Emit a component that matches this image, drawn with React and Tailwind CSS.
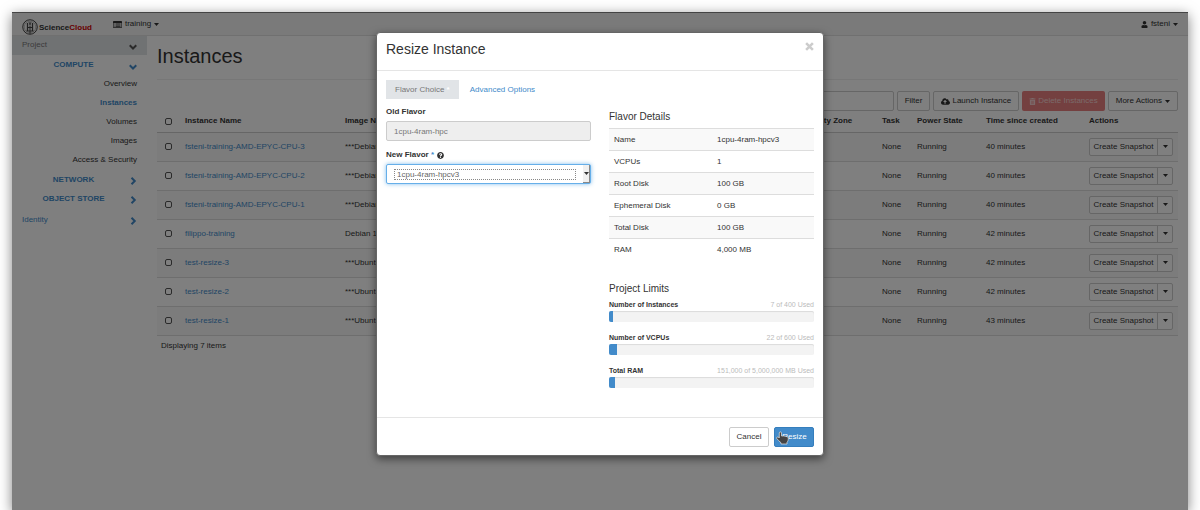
import React from "react";
import { FaCloudUploadAlt, FaQuestionCircle, FaTrashAlt, FaUser } from "react-icons/fa";

const instances = [
  { name: "fsteni-training-AMD-EPYC-CPU-3", image: "***Debian 10", age: "40 minutes" },
  { name: "fsteni-training-AMD-EPYC-CPU-2", image: "***Debian 10", age: "40 minutes" },
  { name: "fsteni-training-AMD-EPYC-CPU-1", image: "***Debian 10", age: "40 minutes" },
  { name: "filippo-training", image: "Debian 10", age: "42 minutes" },
  { name: "test-resize-3", image: "***Ubuntu 20.04", age: "42 minutes" },
  { name: "test-resize-2", image: "***Ubuntu 20.04", age: "42 minutes" },
  { name: "test-resize-1", image: "***Ubuntu 20.04", age: "43 minutes" },
];

const flavorDetails = [
  ["Name", "1cpu-4ram-hpcv3"],
  ["VCPUs", "1"],
  ["Root Disk", "100 GB"],
  ["Ephemeral Disk", "0 GB"],
  ["Total Disk", "100 GB"],
  ["RAM", "4,000 MB"],
];

const limits = [
  { label: "Number of Instances", used: "7 of 400 Used", percent: 2 },
  { label: "Number of VCPUs", used: "22 of 600 Used", percent: 4 },
  { label: "Total RAM", used: "151,000 of 5,000,000 MB Used", percent: 3 },
];

function SealLogo() {
  return (
    <svg viewBox="0 0 32 32" className="size-4" fill="none" stroke="#444" aria-hidden="true">
      <circle cx="16" cy="16" r="14.5" strokeWidth="2" />
      <circle cx="16" cy="16" r="11.500" strokeWidth="1" stroke="#888" />
      <path d="M11 24V8M21 24V8" strokeWidth="2.500" />
      <path d="M16 13v17M9 24h14M12 17h8" strokeWidth="2" />
      <path d="M14 6l2 6 2-6" strokeWidth="1.500" />
    </svg>
  );
}

function ListIcon() {
  return (
    <svg viewBox="0 0 18 14" className="h-[7px] w-[9px]" aria-hidden="true">
      <path
        fill="currentColor"
        fillRule="evenodd"
        d="M1.5 0h15A1.5 1.5 0 0 1 18 1.5v11a1.5 1.5 0 0 1-1.5 1.5h-15A1.5 1.5 0 0 1 0 12.500v-11A1.500 1.500 0 0 1 1.500 0zM1.200 4v8.700h15.600V4zM3 5h2v1.500H3zM6 5h9v1.500H6zM3 7.700h2v1.500H3zM6 7.700h9v1.500H6zM3 10.400h2v1.500H3zM6 10.400h9v1.500H6z"
      />
    </svg>
  );
}

function Caret() {
  return (
    <svg viewBox="0 0 10 6" className="h-[3px] w-[5px] shrink-0" aria-hidden="true">
      <path d="M0 0h10L5 6z" fill="currentColor" />
    </svg>
  );
}

function ChevronDown() {
  return (
    <svg viewBox="0 0 16 16" className="mt-1 size-2 shrink-0" aria-hidden="true">
      <path d="M1.500 4.500L8 11l6.500-6.500" fill="none" stroke="currentColor" strokeWidth="4" />
    </svg>
  );
}

function ChevronRight() {
  return (
    <svg viewBox="0 0 16 16" className="mt-[3px] size-2 shrink-0" aria-hidden="true">
      <path d="M5 1.500L11.500 8 5 14.500" fill="none" stroke="currentColor" strokeWidth="4" />
    </svg>
  );
}

function CloseIcon() {
  return (
    <svg viewBox="0 0 16 16" className="size-[9px]" aria-hidden="true">
      <path d="M2 2l12 12M14 2L2 14" fill="none" stroke="currentColor" strokeWidth="4.500" />
    </svg>
  );
}

function HandCursor() {
  return (
    <svg
      viewBox="0 0 26 28"
      className="pointer-events-none absolute top-[3px] left-px h-[14px] w-[13px]"
      aria-hidden="true"
    >
      <path
        d="M6.500 4C6.500 1 11 1 11 4v6c5-.5 12 .5 13.500 3.500 .3 4-.5 7-2.500 9V26H10v-2.500C7 21 4 18 1.500 15c-1-2.500 2-4 3.500-2.500L6.500 14z"
        fill="#444"
        stroke="#ddd"
        strokeWidth="1.500"
      />
    </svg>
  );
}

function NavGroup({ label, open }) {
  return (
    <button type="button" className="flex h-[19px] w-full items-center pr-[10px] pl-[6px] font-bold text-[#428bca]">
      <span className="flex-1 text-center">{label}</span>
      {open ? <ChevronDown /> : <ChevronRight />}
    </button>
  );
}

function Sidebar() {
  return (
    <nav aria-label="Panels" className="w-[135px] shrink-0">
      <button
        type="button"
        className="flex h-[19px] w-full items-center justify-between bg-[#e1e4e7] pr-[10px] pb-px pl-[10px] text-[#777]"
      >
        Project
        <span className="text-[#555]">
          <ChevronDown />
        </span>
      </button>
      <NavGroup label="COMPUTE" open />
      <ul className="mb-px text-right text-[#333]">
        {["Overview", "Instances", "Volumes", "Images", "Access & Security"].map((item) => (
          <li key={item} className="flex h-[19px] items-center justify-end pr-[10px]">
            <a href="#" className={item === "Instances" ? "font-bold text-[#428bca]" : ""}>
              {item}
            </a>
          </li>
        ))}
      </ul>
      <NavGroup label="NETWORK" />
      <NavGroup label="OBJECT STORE" />
      <button
        type="button"
        className="mt-[2px] flex h-[19px] w-full items-center justify-between px-[10px] text-[#428bca]"
      >
        Identity
        <ChevronRight />
      </button>
    </nav>
  );
}

function InstancesTable() {
  return (
    <table className="w-full table-fixed border-collapse text-left">
      <thead>
        <tr className="h-[21px] border-b border-[#ccc]">
          <th className="w-[23px] pl-2">
            <input
              type="checkbox"
              aria-label="Select all instances"
              className="block size-[7px] appearance-none rounded-[2px] border border-[#555] bg-white"
            />
          </th>
          <th className="w-[160px] px-[5px]">Instance Name</th>
          <th className="px-[5px]">Image Name</th>
          <th className="w-[93px] px-[5px] whitespace-nowrap">Availability Zone</th>
          <th className="w-[35px] px-[5px]">Task</th>
          <th className="w-[69px] px-[5px]">Power State</th>
          <th className="w-[103px] px-[5px]">Time since created</th>
          <th className="w-[94px] px-[5px]">Actions</th>
        </tr>
      </thead>
      <tbody>
        {instances.map((row) => (
          <tr key={row.name} className="h-[29px] border-b border-[#ddd] odd:bg-[#f9f9f9]">
            <td className="pl-2">
              <input
                type="checkbox"
                aria-label={`Select ${row.name}`}
                className="block size-[7px] appearance-none rounded-[2px] border border-[#555] bg-white"
              />
            </td>
            <td className="px-[5px]">
              <a href="#" className="text-[#428bca]">
                {row.name}
              </a>
            </td>
            <td className="px-[5px]">{row.image}</td>
            <td className="px-[5px]">nova</td>
            <td className="px-[5px]">None</td>
            <td className="px-[5px]">Running</td>
            <td className="px-[5px]">{row.age}</td>
            <td className="px-[5px]">
              <div className="flex h-[18px] rounded-[2px] border border-[#ccc] bg-white">
                <button type="button" className="flex-1 border-r border-[#ccc] whitespace-nowrap">
                  Create Snapshot
                </button>
                <button type="button" aria-label="More actions" className="flex w-[14px] items-center justify-center">
                  <Caret />
                </button>
              </div>
            </td>
          </tr>
        ))}
      </tbody>
    </table>
  );
}

function Toolbar() {
  return (
    <div className="flex h-5 justify-end gap-[3px]">
      <input type="search" aria-label="Filter instances" className="w-[180px] rounded-[2px] border border-[#ccc] bg-white px-2" />
      <button type="button" className="rounded-[2px] border border-[#ccc] bg-white px-[7px]">
        Filter
      </button>
      <button
        type="button"
        className="flex items-center gap-[2px] rounded-[2px] border border-[#ccc] bg-white px-[7px] whitespace-nowrap"
      >
        <FaCloudUploadAlt className="size-[9px]" />
        Launch Instance
      </button>
      <button
        type="button"
        disabled
        className="flex items-center gap-[2px] rounded-[2px] bg-[#e98080] px-[7px] whitespace-nowrap text-[#f6d5d5]"
      >
        <FaTrashAlt className="size-[7px]" />
        Delete Instances
      </button>
      <button
        type="button"
        className="flex items-center gap-[3px] rounded-[2px] border border-[#ccc] bg-white px-[7px] whitespace-nowrap"
      >
        More Actions
        <Caret />
      </button>
    </div>
  );
}

function ResizeDialog() {
  return (
    <div
      role="dialog"
      aria-modal="true"
      aria-labelledby="dialog-title"
      className="w-[448px] rounded-[4px] border border-[#666] bg-white shadow-[0_3px_9px_rgba(0,0,0,0.5)]"
    >
      <div className="flex h-[38px] items-start justify-between border-b border-[#e5e5e5] px-[9px] pt-2">
        <h2 id="dialog-title" className="text-[14px] leading-4">
          Resize Instance
        </h2>
        <button type="button" aria-label="Close" className="pt-px text-[#ccc]">
          <CloseIcon />
        </button>
      </div>

      <div className="px-[9px] pt-[9px] pb-[29px]">
        <div role="tablist" className="flex h-[19px] gap-px">
          <button type="button" role="tab" aria-selected="true" className="bg-[#e1e4e7] px-[9px] text-[#777]">
            Flavor Choice <span className="font-bold text-white">*</span>
          </button>
          <button type="button" role="tab" aria-selected="false" className="px-[10px] text-[#428bca]">
            Advanced Options
          </button>
        </div>

        <div className="grid grid-cols-2 gap-x-[18px]">
          <div className="pt-2">
            <label htmlFor="old-flavor" className="block font-bold">
              Old Flavor
            </label>
            <input
              id="old-flavor"
              type="text"
              readOnly
              value="1cpu-4ram-hpc"
              className="mt-1 block h-5 w-full rounded-[2px] border border-[#ccc] bg-[#eee] px-[7px] text-[#777]"
            />
            <label htmlFor="new-flavor" className="mt-[9px] flex items-center gap-[3px] font-bold">
              <span>
                New Flavor <span className="text-[#428bca]">*</span>
              </span>
              <FaQuestionCircle className="size-[7px]" />
            </label>
            <div className="mt-1 flex h-5 items-center rounded-[2px] border border-[#66afe9] bg-white pl-[7px] shadow-[0_0_4px_rgba(102,175,233,0.8)]">
              <select
                id="new-flavor"
                defaultValue="1cpu-4ram-hpcv3"
                className="mr-[7px] h-[11px] min-w-0 flex-1 appearance-none border border-dotted border-[#888] px-[2px] leading-[9px] text-[#666]"
              >
                <option>1cpu-4ram-hpcv3</option>
              </select>
              <span className="flex h-[18px] w-[7px] items-center justify-center border-r border-b border-[#888] bg-[#f0f0f0]">
                <Caret />
              </span>
            </div>
          </div>

          <div className="pt-3">
            <h3 className="text-[10px] leading-3">Flavor Details</h3>
            <table className="mt-[5px] w-full table-fixed border-collapse text-left">
              <tbody>
                {flavorDetails.map(([label, value]) => (
                  <tr key={label} className="h-[22px] border-t border-[#ddd] odd:bg-[#f9f9f9]">
                    <th scope="row" className="w-[103px] px-[5px] font-normal">
                      {label}
                    </th>
                    <td className="px-[5px]">{value}</td>
                  </tr>
                ))}
              </tbody>
            </table>

            <h3 className="mt-[22px] text-[10px] leading-3">Project Limits</h3>
            <div className="mt-1 flex flex-col gap-[10px]">
              {limits.map((limit) => (
                <div key={limit.label}>
                  <div className="flex h-3 items-center justify-between text-[7px]">
                    <strong>{limit.label}</strong>
                    <span className="text-[#bbb]">{limit.used}</span>
                  </div>
                  <div className="h-[11px] overflow-hidden rounded-[2px] bg-[#f3f3f3] shadow-[inset_0_1px_1px_rgba(0,0,0,0.1)]">
                    <div className="h-full bg-[#428bca]" style={{ width: `${limit.percent}%` }} />
                  </div>
                </div>
              ))}
            </div>
          </div>
        </div>
      </div>

      <div className="flex justify-end gap-[5px] border-t border-[#e5e5e5] px-[9px] pt-[9px] pb-2">
        <button type="button" className="h-5 w-10 rounded-[2px] border border-[#ccc] bg-white">
          Cancel
        </button>
        <button type="button" className="relative h-5 w-10 rounded-[2px] border border-[#357ebd] bg-[#428bca] pl-px text-white">
          Resize
          <HandCursor />
        </button>
      </div>
    </div>
  );
}

export default function App() {
  return (
    <div className="flex min-h-screen flex-col overflow-hidden bg-white px-3 pt-3 font-['Liberation_Sans',Arial,sans-serif] text-[8px] leading-[10px] text-[#333]">
      <div className="relative flex flex-1 flex-col bg-white shadow-[0_3px_12px_rgba(0,0,0,0.5)]">
        <header className="flex h-6 justify-between border-t border-b border-t-[#888] border-b-[#e0e0e0] bg-[#f4f4f4] px-[10px]">
          <div className="flex">
            <a href="#" className="mt-[6px] flex items-center gap-px">
              <SealLogo />
              <span className="pt-px font-bold">
                Science<span className="text-[#d00000]">Cloud</span>
              </span>
            </a>
            <button type="button" className="ml-[21px] flex items-center gap-[3px]">
              <ListIcon />
              training
              <Caret />
            </button>
          </div>
          <button type="button" className="flex items-center gap-[3px]">
            <FaUser className="size-[7px]" />
            fsteni
            <Caret />
          </button>
        </header>

        <div className="flex flex-1">
          <Sidebar />
          <main className="min-w-0 flex-1 px-[10px]">
            <h1 className="border-b border-[#eee] pt-2 pb-[11px] text-[20px] leading-6">Instances</h1>
            <div className="pt-[11px]">
              <Toolbar />
              <InstancesTable />
              <p className="px-1 pt-[5px]">Displaying 7 items</p>
            </div>
          </main>
        </div>

        <div className="absolute inset-0 flex items-start justify-center bg-black/50 pt-5">
          <ResizeDialog />
        </div>
      </div>
    </div>
  );
}
